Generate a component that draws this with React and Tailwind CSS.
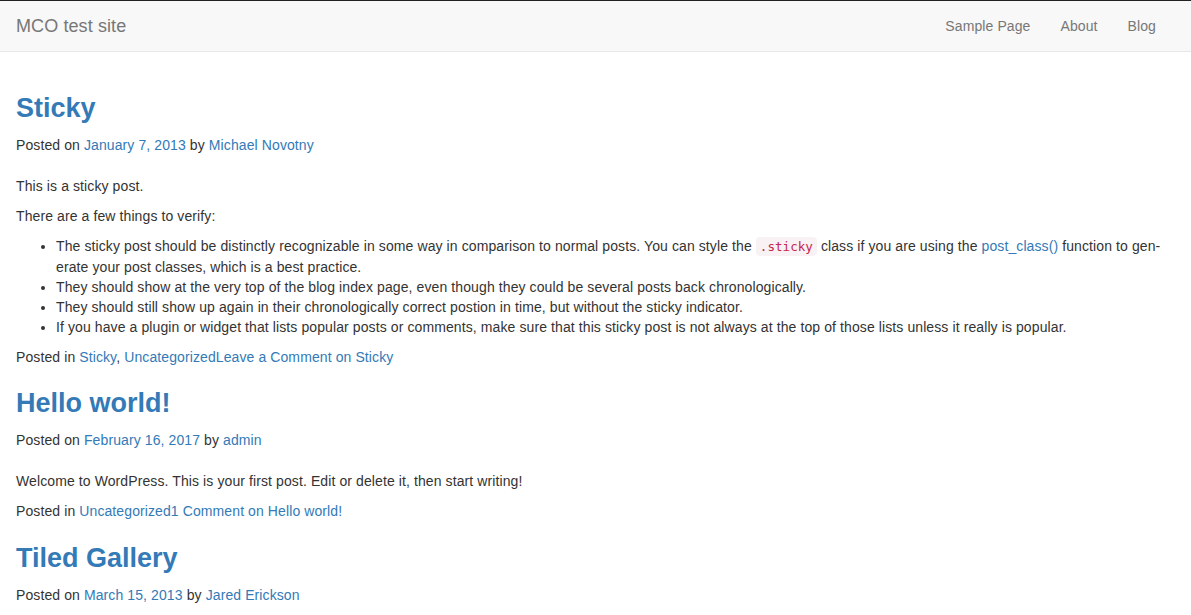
const LINK = "text-[#337ab7] hover:underline";

function Navbar() {
  const links = ["Sample Page", "About", "Blog"];
  return (
    <nav className="border-t border-t-[#222] border-b border-b-[#e7e7e7] bg-[#f8f8f8]">
      <div className="flex h-[50px] items-center justify-between pl-[15px] pr-[20px]">
        <a href="#" className="px-[1px] text-[18px] leading-[20px] text-[#777]">
          MCO test site
        </a>
        <ul className="flex">
          {links.map((l) => (
            <li key={l}>
              <a href="#" className="block px-[15px] py-[15px] text-[14px] leading-[20px] text-[#777]">
                {l}
              </a>
            </li>
          ))}
        </ul>
      </div>
    </nav>
  );
}

function Meta({ date, author }) {
  return (
    <div className="h-[20px]">
      Posted on{" "}
      <a href="#" className={LINK}>
        {date}
      </a>{" "}
      by{" "}
      <a href="#" className={LINK}>
        {author}
      </a>
    </div>
  );
}

function Title({ children }) {
  return (
    <h2 className="mt-[20px] mb-[10px] text-[27px] font-bold leading-[33px] tracking-normal">
      <a href="#" className="text-[#337ab7]">
        {children}
      </a>
    </h2>
  );
}

export default function App() {
  return (
    <div
      className="min-h-screen bg-white text-[14px] leading-[20px] tracking-[0.1px] text-[#333]"
      style={{ fontFamily: '"Liberation Sans", Arial, Helvetica, sans-serif' }}
    >
      <Navbar />
      <main className="pt-[20px] px-[16px]">
        <article>
          <header>
            <Title>Sticky</Title>
            <Meta date="January 7, 2013" author="Michael Novotny" />
          </header>
          <div className="mt-[21px]">
            <p className="mb-[10px]">This is a sticky post.</p>
            <p className="mb-[10px]">There are a few things to verify:</p>
            <ul className="mb-[10px] list-disc pl-[40px]">
              <li>
                The sticky post should be distinctly recognizable in some way in comparison to normal posts. You can
                style the{" "}
                <code
                  className="rounded-[4px] bg-[#f9f2f4] px-[4px] py-[2px] text-[12.6px] tracking-normal text-[#c7254e]"
                  style={{ fontFamily: '"DejaVu Sans Mono", Menlo, monospace' }}
                >
                  .sticky
                </code>{" "}
                class if you are using the{" "}
                <a href="#" className={LINK}>
                  post_class()
                </a>{" "}
                function to gen&shy;erate your post classes, which is a best practice.
              </li>
              <li>
                They should show at the very top of the blog index page, even though they could be several posts back
                chronologically.
              </li>
              <li>They should still show up again in their chronologically correct postion in time, but without the sticky indicator.</li>
              <li>
                If you have a plugin or widget that lists popular posts or comments, make sure that this sticky post is
                not always at the top of those lists unless it really is popular.
              </li>
            </ul>
          </div>
          <footer>
            Posted in{" "}
            <a href="#" className={LINK}>
              Sticky
            </a>
            ,{" "}
            <a href="#" className={LINK}>
              Uncategorized
            </a>
            <a href="#" className={LINK}>
              Leave a Comment on Sticky
            </a>
          </footer>
        </article>

        <article>
          <header>
            <Title>Hello world!</Title>
            <Meta date="February 16, 2017" author="admin" />
          </header>
          <div className="mt-[21px]">
            <p className="mb-[10px]">Welcome to WordPress. This is your first post. Edit or delete it, then start writing!</p>
          </div>
          <footer>
            Posted in{" "}
            <a href="#" className={LINK}>
              Uncategorized
            </a>
            <a href="#" className={LINK}>
              1 Comment on Hello world!
            </a>
          </footer>
        </article>

        <article className="pt-[1px]">
          <header>
            <Title>Tiled Gallery</Title>
            <Meta date="March 15, 2013" author="Jared Erickson" />
          </header>
          <div className="mt-[21px] h-[200px]" />
        </article>
      </main>
    </div>
  );
}
